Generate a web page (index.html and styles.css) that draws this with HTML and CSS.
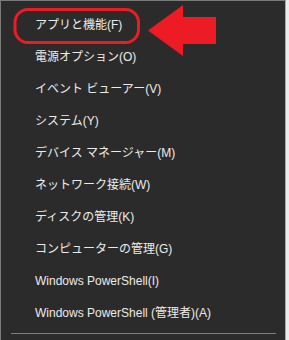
FILE: index.html
```html
<!DOCTYPE html>
<html lang="ja">
<head>
    <meta charset="UTF-8">
    <title>クイックリンクメニュー</title>
    <link rel="stylesheet" href="styles.css">
</head>
<body>

<div class="screen">
    <div class="menu">
        <ul class="menu-list">
            <li>アプリと機能(F)</li>
            <li>電源オプション(O)</li>
            <li>イベント ビューアー(V)</li>
            <li>システム(Y)</li>
            <li>デバイス マネージャー(M)</li>
            <li>ネットワーク接続(W)</li>
            <li>ディスクの管理(K)</li>
            <li>コンピューターの管理(G)</li>
            <li>Windows PowerShell(I)</li>
            <li>Windows PowerShell (管理者)(A)</li>
        </ul>
        <div class="separator"></div>
    </div>
    <div class="backdrop"></div>

    <!-- 注釈：赤枠と矢印 -->
    <svg class="mark" width="289" height="70" viewBox="0 0 289 70">
        <rect x="15" y="9.5" width="123.5" height="33" rx="13" ry="13" fill="none" stroke="#ed1c24" stroke-width="3"/>
        <polygon points="148,30.5 183,5 183,17 216,17 216,44 183,44 183,56" fill="#ed1c24"/>
    </svg>
</div>

</body>
</html>
```

FILE: styles.css
```css
body {
    margin: 0;
    padding: 0;
    background-color: #2b2b2b;
    font-family: 'Liberation Sans', 'Noto Sans CJK JP', sans-serif;
}
.screen {
    position: relative;
    display: flex;
    width: 289px;
    height: 340px;
    overflow: hidden;
}
.menu {
    width: 284px;
    height: 340px;
    background-color: #2b2b2b;
    border-top: 1px solid #7a7a7a;
    border-left: 1px solid #7a7a7a;
    border-right: 1px solid #a9a9a9;
}
.menu-list {
    list-style: none;
    margin: 0;
    padding: 8px 0 0 34px;
}
.menu-list li {
    height: 32px;
    line-height: 32px;
    font-size: 12px;
    color: #ececec;
    white-space: nowrap;
}
.separator {
    margin: 4px 0 0 10px;
    width: 265px;
    height: 1px;
    background-color: #7f7f7f;
}
.backdrop {
    flex: 1;
    background-color: #ececec;
}
.mark {
    position: absolute;
    left: 0;
    top: 0;
}
```
